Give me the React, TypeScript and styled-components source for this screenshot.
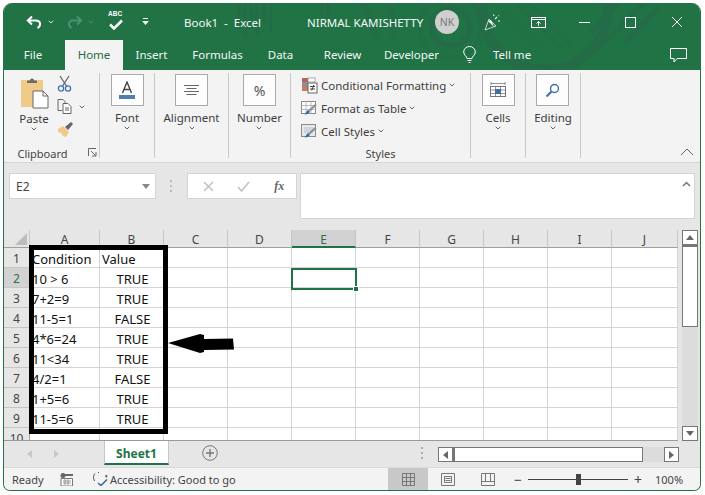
import React from "react";
import styled, { createGlobalStyle } from "styled-components";

const Global = createGlobalStyle`
  html, body { margin: 0; padding: 0; background: #fff; }
  body { font-family: "Noto Sans", "Liberation Sans", sans-serif; color: #3b3b3b; }
  * { box-sizing: border-box; }
`;

const Win = styled.div`
  margin: 3px 0 0 3px;
  width: 698px;
  height: 488px;
  border: 1px solid #217346;
  border-top: 0;
  border-radius: 9px 9px 7px 7px;
  overflow: hidden;
  display: flex;
  flex-direction: column;
  background: #e6e6e6;
`;
const Head = styled.div`
  position: relative;
  height: 67px;
  flex: none;
  background: #217346;
  color: #fff;
`;
const Decor = styled.svg`
  position: absolute;
  left: 0;
  top: 0;
`;
const TitleBar = styled.div`
  position: relative;
  display: flex;
  align-items: center;
  height: 37px;
  padding-top: 1px;
`;
const Slot = styled.div<{ $w: number; $align?: string }>`
  flex: none;
  width: ${(p) => p.$w}px;
  display: flex;
  align-items: center;
  justify-content: ${(p) => p.$align || "center"};
`;
const TitleText = styled.span<{ $w: number }>`
  flex: none;
  width: ${(p) => p.$w}px;
  font-size: 11.5px;
  white-space: pre;
  color: #f4f8f5;
`;
const Avatar = styled.div`
  width: 24px;
  height: 24px;
  border-radius: 50%;
  background: #cfcfcf;
  color: #7a7a7a;
  font-size: 10.5px;
  display: flex;
  align-items: center;
  justify-content: center;
`;
const AbcWrap = styled.div`
  position: relative;
  width: 16px;
  height: 20px;
`;
const AbcText = styled.span`
  position: absolute;
  left: 0;
  top: -2px;
  font-family: "Liberation Sans", sans-serif;
  font-size: 6.5px;
  font-weight: 700;
  color: #fff;
`;
const TabRow = styled.div`
  position: relative;
  display: flex;
  height: 30px;
`;
const Tab = styled.div<{ $w: number; $active?: boolean }>`
  flex: none;
  width: ${(p) => p.$w}px;
  display: flex;
  align-items: center;
  justify-content: center;
  font-size: 11.5px;
  white-space: nowrap;
  padding-bottom: 2px;
  color: ${(p) => (p.$active ? "#1f6c42" : "#f2f7f4")};
  background: ${(p) => (p.$active ? "#f3f3f3" : "transparent")};
`;
const Ribbon = styled.div`
  flex: none;
  height: 93px;
  display: flex;
  background: #f3f3f3;
  border-bottom: 1px solid #d6d6d6;
`;
const Group = styled.div<{ $w: number }>`
  flex: none;
  width: ${(p) => p.$w}px;
  margin: 3px 0 4px;
  border-right: 1px solid #c8c8c8;
  display: flex;
  flex-direction: column;
  position: relative;
`;
const GroupBody = styled.div`
  flex: 1;
  display: flex;
  justify-content: center;
  min-height: 0;
`;
const GroupLabel = styled.div<{ $pr?: number }>`
  height: 12px;
  line-height: 15px;
  font-size: 11px;
  text-align: center;
  color: #444;
  white-space: nowrap;
  padding-right: ${(p) => p.$pr || 0}px;
`;
const Launcher = styled.svg`
  position: absolute;
  right: 2px;
  bottom: 1px;
`;
const BigTool = styled.div`
  display: flex;
  flex-direction: column;
  align-items: center;
  font-size: 11.5px;
  color: #3d3d3d;
  white-space: nowrap;
`;
const IconBox = styled.div`
  width: 33px;
  height: 32px;
  margin-top: 1px;
  border: 1px solid #a9a9a9;
  background: #fdfdfd;
  display: flex;
  align-items: center;
  justify-content: center;
  font-size: 14px;
  color: #555;
  margin-bottom: 3px;
`;
const ToolLabel = styled.div`
  height: 17px;
  line-height: 17px;
`;
const ClipBody = styled.div`
  flex: 1;
  display: flex;
  padding-left: 13px;
`;
const PasteCol = styled.div`
  width: 34px;
  display: flex;
  flex-direction: column;
  align-items: center;
  font-size: 11.5px;
  padding-top: 4px;
`;
const PasteLabel = styled.div`
  height: 16px;
  line-height: 16px;
  margin-top: 2px;
`;
const SmallCol = styled.div`
  margin-left: 6px;
  display: flex;
  flex-direction: column;
  gap: 7px;
  padding-top: 2px;
`;
const SmallRow = styled.div`
  display: flex;
  align-items: center;
  gap: 6px;
`;
const StyleList = styled.div`
  flex: 1;
  display: flex;
  flex-direction: column;
  padding: 2px 0 0 10px;
  gap: 3px;
`;
const StyleRow = styled.div`
  height: 20px;
  display: flex;
  align-items: center;
  gap: 3px;
  font-size: 11.5px;
  color: #3d3d3d;
  white-space: nowrap;
`;
const Collapse = styled.div`
  flex: 1;
  display: flex;
  align-items: flex-end;
  justify-content: flex-end;
  padding: 0 6px 6px 0;
`;
const FormulaArea = styled.div`
  flex: none;
  height: 67px;
  padding: 10px 5px 0 5px;
  display: flex;
  align-items: flex-start;
`;
const NameBox = styled.div`
  width: 147px;
  height: 26px;
  background: #fff;
  border: 1px solid #d4d4d4;
  display: flex;
  align-items: center;
  justify-content: space-between;
  padding: 0 5px 0 6px;
  font-size: 12px;
  color: #444;
`;
const Grip = styled.div`
  width: 31px;
  height: 26px;
  display: flex;
  align-items: center;
  justify-content: center;
`;
const FxBox = styled.div`
  width: 110px;
  height: 26px;
  background: #fff;
  border: 1px solid #d4d4d4;
  display: flex;
  align-items: center;
  justify-content: space-around;
  padding: 0 0 0 3px;
  color: #bdbdbd;
`;
const FxLabel = styled.span`
  font-family: "Liberation Serif", serif;
  font-style: italic;
  font-size: 12px;
  font-weight: 700;
  color: #666;
`;
const FormulaInput = styled.div`
  margin-left: 3px;
  width: 395px;
  height: 46px;
  background: #fff;
  border: 1px solid #d4d4d4;
  display: flex;
  justify-content: flex-end;
  padding: 7px 3px 0 0;
`;
const SheetWrap = styled.div`
  flex: none;
  height: 211px;
  display: flex;
  background: #e6e6e6;
`;
const SheetMain = styled.div`
  position: relative;
  width: 674px;
  flex: none;
  overflow: hidden;
  border-bottom: 1px solid #9a9a9a;
`;
const Cells = styled.div`
  display: grid;
  grid-template-columns: 26px 70px 64px repeat(7, 64px) 66px;
  grid-template-rows: 18px repeat(9, 20px) 13px;
`;
const ColHead = styled.div<{ $on?: boolean }>`
  position: relative;
  font-size: 12px;
  text-align: center;
  line-height: 19px;
  color: ${(p) => (p.$on ? "#2e6e4b" : "#444")};
  background: ${(p) => (p.$on ? "#d2d2d2" : "#e6e6e6")};
  border-right: 1px solid #c6c6c6;
  border-bottom: ${(p) => (p.$on ? "2px solid #217346" : "1px solid #9e9e9e")};
  overflow: hidden;
`;
const Corner = styled.div`
  background: #e6e6e6;
  border-right: 1px solid #c6c6c6;
  border-bottom: 1px solid #9e9e9e;
  display: flex;
  align-items: flex-end;
  justify-content: flex-end;
  padding: 0 2px 2px 0;
`;
const RowHead = styled.div<{ $on?: boolean }>`
  background: ${(p) => (p.$on ? "#d2d2d2" : "#e6e6e6")};
  border-right: 1px solid #9e9e9e;
  border-bottom: 1px solid #c6c6c6;
  font-size: 12px;
  line-height: 22px;
  text-align: center;
  color: ${(p) => (p.$on ? "#2e6e4b" : "#444")};
  overflow: hidden;
`;
const Cell = styled.div<{ $center?: boolean }>`
  background: #fff;
  border-right: 1px solid #d4d4d4;
  border-bottom: 1px solid #d4d4d4;
  font-size: 13px;
  line-height: 22px;
  color: #111;
  padding-left: 2px;
  white-space: nowrap;
  text-align: ${(p) => (p.$center ? "center" : "left")};
  overflow: visible;
`;
const Selection = styled.div`
  position: absolute;
  left: 287px;
  top: 38px;
  width: 66px;
  height: 22px;
  border: 2px solid #217346;
`;
const Handle = styled.div`
  position: absolute;
  right: -4px;
  bottom: -4px;
  width: 6px;
  height: 6px;
  background: #217346;
  border: 1px solid #fff;
`;
const BlackBox = styled.div`
  position: absolute;
  left: 25px;
  top: 15px;
  width: 139px;
  height: 189px;
  border: 5px solid #000;
`;
const Arrow = styled.svg`
  position: absolute;
  left: 163px;
  top: 102px;
`;
const VBar = styled.div`
  flex: none;
  margin-left: 4px;
  width: 16px;
  display: flex;
  flex-direction: column;
  background: #dcdcdc;
`;
const SBtn = styled.div<{ $h?: number; $w?: number }>`
  flex: none;
  width: ${(p) => p.$w || 16}px;
  height: ${(p) => p.$h || 15}px;
  border: 1px solid #777;
  background: #fff;
  display: flex;
  align-items: center;
  justify-content: center;
`;
const VThumb = styled.div`
  flex: none;
  height: 82px;
  background: #fff;
  border: 1px solid #777;
  border-top-width: 2px;
`;
const VTrack = styled.div`
  flex: 1;
`;
const TabStrip = styled.div`
  flex: none;
  height: 27px;
  display: flex;
  background: #e6e6e6;
  border-bottom: 1px solid #dadada;
`;
const SheetNav = styled.div`
  flex: none;
  width: 100px;
  display: flex;
  align-items: center;
  justify-content: center;
  gap: 22px;
  padding: 0 22px 0 0;
`;
const SheetTab = styled.div`
  flex: none;
  width: 65px;
  height: 24px;
  background: #fff;
  border-bottom: 2px solid #217346;
  border-left: 1px solid #c6c6c6;
  border-right: 1px solid #c6c6c6;
  color: #217346;
  font-size: 12px;
  font-weight: 700;
  text-align: center;
  line-height: 26px;
`;
const AddSheet = styled.div`
  flex: none;
  margin-left: 33px;
  width: 16px;
  height: 24px;
  display: flex;
  align-items: center;
  justify-content: center;
`;
const Dots = styled.div`
  flex: none;
  margin-left: 196px;
  width: 16px;
  height: 24px;
  display: flex;
  align-items: center;
  justify-content: center;
`;
const HBar = styled.div`
  flex: none;
  margin: 6px 0 0 8px;
  width: 241px;
  height: 15px;
  display: flex;
  background: #dcdcdc;
`;
const HThumb = styled.div`
  flex: none;
  width: 190px;
  background: #fff;
  border: 1px solid #777;
  border-left-width: 2px;
`;
const Status = styled.div`
  flex: 1;
  display: flex;
  align-items: center;
  background: #f3f3f3;
  font-size: 11px;
  color: #444;
  white-space: nowrap;
`;
const ViewBtn = styled.div<{ $on?: boolean }>`
  flex: none;
  width: 40px;
  height: 100%;
  display: flex;
  align-items: center;
  justify-content: center;
  background: ${(p) => (p.$on ? "#c8c8c8" : "transparent")};
`;
const Zoom = styled.div`
  flex: none;
  position: relative;
  width: 100px;
  height: 1px;
  background: #444;
  margin: 0 4px;
`;
const ZoomKnob = styled.div`
  position: absolute;
  left: 48px;
  top: -5px;
  width: 5px;
  height: 11px;
  background: #444;
`;
const ZoomSign = styled.span`
  flex: none;
  width: 12px;
  text-align: center;
  font-size: 14px;
  color: #444;
`;

const Chev = ({ c = "#666", s = 6 }: { c?: string; s?: number }) => (
  <svg width={s} height={s - 2} viewBox="0 0 6 4" fill="none">
    <path d="M.7.7 3 3 5.300.7" stroke={c} strokeWidth="1" />
  </svg>
);

const Undo = ({ c, flip }: { c: string; flip?: boolean }) => (
  <svg width="16" height="14" viewBox="0 0 16 14" fill="none" stroke={c} strokeWidth="2" style={flip ? { transform: "scaleX(-1)" } : undefined}>
    <path d="M6 1.500 1.800 5.500 6 9.500M2 5.500h7.500c3 0 4.600 1.600 4.600 3.600 0 1.500-.8 3-2.600 3.900" />
  </svg>
);

const rowsData: [string, string][] = [
  ["Condition", "Value"],
  ["10 > 6", "TRUE"],
  ["7+2=9", "TRUE"],
  ["11-5=1", "FALSE"],
  ["4*6=24", "TRUE"],
  ["11<34", "TRUE"],
  ["4/2=1", "FALSE"],
  ["1+5=6", "TRUE"],
  ["11-5=6", "TRUE"],
  ["", ""],
];
const cols = ["A", "B", "C", "D", "E", "F", "G", "H", "I", "J"];

const StyleIcon = ({ kind }: { kind: number }) => (
  <svg width="17" height="17" viewBox="0 0 17 17" fill="none">
    {kind === 0 ? (
      <>
        <rect x="1" y="1" width="6" height="4" fill="#b4664f" />
        <rect x="7" y="1" width="7" height="4" fill="#fff" stroke="#8a8a8a" strokeWidth=".7" />
        <rect x="1" y="5" width="6" height="4" fill="#8c8c9a" />
        <rect x="1" y="9" width="6" height="5" fill="#c97a5f" />
        <rect x="7" y="6" width="9" height="10" fill="#fff" stroke="#666" />
        <path d="M9 9.500h5M9 12h5M12.800 8 10.600 13.500" stroke="#333" strokeWidth=".9" />
      </>
    ) : (
      <>
        <rect x=".5" y="1.500" width="14" height="12" fill={kind === 1 ? "#fff" : "#e8e8e8"} stroke="#8a8a8a" />
        {kind === 1 ? (
          <path d="M5 1.500v12M10 1.500v12M.5 5.500h14M.5 9.500h14" stroke="#a9a9a9" strokeWidth=".8" />
        ) : (
          <rect x="3" y="4" width="9" height="6" fill="#cfd5db" />
        )}
        <path d="M15.500 5.500 9 11.500 7.500 10l6.500-6z" fill="#8f8f8f" />
        <path d="M8.800 11.500 7 10c-1.500.6-1.200 2.200-3.500 4.500 2.600 0 5-.8 5.300-3z" fill="#2f6fa8" />
      </>
    )}
  </svg>
);

export default function App() {
  return (
    <>
      <Global />
      <Win>
        <Head>
          <Decor width="696" height="67" viewBox="0 0 696 67" fill="none">
            <g stroke="#26694a" opacity=".75">
              <path d="M235 0v26M241 0v34M247 0v26M253 0v33M260 0v20M267 0v30" strokeWidth="3" />
              <path d="M318 0v12M324 0v22" strokeWidth="3" />
              <path d="M360 0l12 34M385 0l6 36" strokeWidth="7" opacity=".6" />
              <circle cx="447" cy="24" r="19" strokeWidth="6" />
              <circle cx="447" cy="24" r="31" strokeWidth="4" opacity=".5" />
              <circle cx="541" cy="4" r="63" strokeWidth="10" />
              <path d="M512 0l44 44M525 0l42 42M497 8l38 38" strokeWidth="3" opacity=".8" />
              <path d="M615 0l-28 30M640 0l-46 46M655 4l-34 36" strokeWidth="5" />
            </g>
          </Decor>
          <TitleBar>
            <Slot $w={22} />
            <Slot $w={16}><Undo c="#fff" /></Slot>
            <Slot $w={18}><Chev c="#d8e6de" /></Slot>
            <Slot $w={7} />
            <Slot $w={16}><Undo c="#4d9070" flip /></Slot>
            <Slot $w={16}><Chev c="#4d9070" /></Slot>
            <Slot $w={9} />
            <Slot $w={16}>
              <AbcWrap>
                <AbcText>ABC</AbcText>
                <svg width="16" height="20" viewBox="0 0 16 20" fill="none" style={{ position: "absolute", left: 0, top: 0 }}>
                  <path d="M2 12.500 6 16.500 14 8.500" stroke="#fff" strokeWidth="2.600" />
                </svg>
              </AbcWrap>
            </Slot>
            <Slot $w={9} />
            <Slot $w={24}>
              <svg width="7" height="8" viewBox="0 0 7 8" fill="#eef5f0">
                <rect x="1" y="0" width="5" height="1" />
                <path d="M0 3h7L3.500 7z" />
              </svg>
            </Slot>
            <Slot $w={27} />
            <TitleText $w={123}>Book1  -  Excel</TitleText>
            <TitleText $w={128}>NIRMAL KAMISHETTY</TitleText>
            <Slot $w={24}><Avatar>NK</Avatar></Slot>
            <Slot $w={24} />
            <Slot $w={18}>
              <svg width="17" height="17" viewBox="0 0 17 17" fill="none" stroke="#eef5f0">
                <path d="M1 16 5 5l7 7z" strokeWidth=".8" />
                <path d="M4 7l6 6-3-7z" fill="#fff" stroke="none" />
                <path d="M11 5l2-2M14 7h2M10 2 9.500.5M15 1.500l-.5.5" strokeWidth="1.100" />
              </svg>
            </Slot>
            <Slot $w={29} />
            <Slot $w={16}>
              <svg width="15" height="11" viewBox="0 0 15 11" fill="none" stroke="#fff">
                <rect x=".5" y=".5" width="14" height="10" />
                <path d="M.5 2.500h14M7.500 9V4.500M5.500 6.500l2-2 2 2" />
              </svg>
            </Slot>
            <Slot $w={31} />
            <Slot $w={14}>
              <svg width="11" height="1" viewBox="0 0 11 1"><rect width="11" height="1" fill="#fff" /></svg>
            </Slot>
            <Slot $w={31} />
            <Slot $w={16}>
              <svg width="11" height="11" viewBox="0 0 11 11" fill="none" stroke="#fff"><rect x=".5" y=".5" width="10" height="10" /></svg>
            </Slot>
            <Slot $w={31} />
            <Slot $w={16}>
              <svg width="12" height="12" viewBox="0 0 12 12" stroke="#fff" strokeWidth="1"><path d="M1 1l10 10M11 1 1 11" /></svg>
            </Slot>
          </TitleBar>
          <TabRow>
            <Tab $w={58}>File</Tab>
            <Tab $w={3} />
            <Tab $w={58} $active>Home</Tab>
            <Tab $w={57}>Insert</Tab>
            <Tab $w={75}>Formulas</Tab>
            <Tab $w={51}>Data</Tab>
            <Tab $w={73}>Review</Tab>
            <Tab $w={65}>Developer</Tab>
            <Slot $w={18} />
            <Slot $w={15}>
              <svg width="13" height="18" viewBox="0 0 13 18" fill="none" stroke="#fff">
                <path d="M4 12.500c0-2-3.300-3.400-3.300-6.500a5.800 5.500 0 0 1 11.600 0c0 3.100-3.300 4.500-3.300 6.500zM4.500 14.500h4M5.500 16.500h2" />
              </svg>
            </Slot>
            <Slot $w={15} />
            <Tab $w={40}>Tell me</Tab>
            <Slot $w={137} />
            <Slot $w={18}>
              <svg width="17" height="15" viewBox="0 0 17 15" fill="none" stroke="#fff">
                <path d="M.5.500h16v10H7l-3 3.500v-3.500H.5z" />
              </svg>
            </Slot>
          </TabRow>
        </Head>
        <Ribbon>
          <Group $w={96}>
            <ClipBody>
              <PasteCol>
                <svg width="29" height="32" viewBox="0 0 29 32" fill="none">
                  <rect x="1" y="3" width="22" height="27" rx="1" fill="#efcb8a" />
                  <path d="M7 6V3.500h3a2 2 0 0 1 4 0h3V6z" fill="#6b6b6b" />
                  <path d="M13 14h10l5 5v12H13z" fill="#fff" stroke="#666" />
                  <path d="M23 14v5h5" stroke="#666" />
                </svg>
                <PasteLabel>Paste</PasteLabel>
                <Chev />
              </PasteCol>
              <SmallCol>
                <svg width="15" height="17" viewBox="0 0 15 17" fill="none">
                  <path d="M3 1l6.500 10M12 1 5.500 11" stroke="#666" strokeWidth="1.300" />
                  <circle cx="4" cy="13.500" r="2.600" stroke="#3e75ae" strokeWidth="1.300" />
                  <circle cx="11" cy="13.500" r="2.600" stroke="#3e75ae" strokeWidth="1.300" />
                </svg>
                <SmallRow>
                  <svg width="16" height="15" viewBox="0 0 16 15" fill="none" stroke="#666">
                    <path d="M5 11.500H1V.5h5l2 2v2" />
                    <path d="M6 4.500h5l3 3v7H6zM8 9h4M8 11h4" fill="#fbfbfb" />
                  </svg>
                  <Chev />
                </SmallRow>
                <svg width="17" height="17" viewBox="0 0 17 17" style={{ marginTop: 0 }}>
                  <path d="M1 8l5-3 6 6-3 5-3-1-2-3-3-1z" fill="#efcb8a" />
                  <path d="M8 6 14 1l2 2-5 6z" fill="#666" />
                </svg>
              </SmallCol>
            </ClipBody>
            <GroupLabel $pr={18}>Clipboard</GroupLabel>
            <Launcher width="9" height="9" viewBox="0 0 9 9" fill="none" stroke="#666">
              <path d="M.5 8V.5H8M3 3l4.500 4.500M4 8h4V4" />
            </Launcher>
          </Group>
          <Group $w={55}>
            <GroupBody>
              <BigTool>
                <IconBox>
                  <svg width="18" height="19" viewBox="0 0 18 19" fill="none">
                    <path d="M4.500 12 9 1l4.500 11M6 8.500h6" stroke="#444" strokeWidth="1.400" />
                    <rect x="1" y="14" width="16" height="4" fill="#4f7fae" />
                  </svg>
                </IconBox>
                <ToolLabel>Font</ToolLabel>
                <Chev />
              </BigTool>
            </GroupBody>
          </Group>
          <Group $w={74}>
            <GroupBody>
              <BigTool>
                <IconBox>
                  <svg width="15" height="12" viewBox="0 0 15 12" stroke="#666"><path d="M0 1.500h15M2.500 4.500h10M0 7.500h15M2.500 10.500h10" /></svg>
                </IconBox>
                <ToolLabel>Alignment</ToolLabel>
                <Chev />
              </BigTool>
            </GroupBody>
          </Group>
          <Group $w={62}>
            <GroupBody>
              <BigTool>
                <IconBox>%</IconBox>
                <ToolLabel>Number</ToolLabel>
                <Chev />
              </BigTool>
            </GroupBody>
          </Group>
          <Group $w={180}>
            <StyleList>
              <StyleRow><StyleIcon kind={0} />Conditional Formatting <Chev /></StyleRow>
              <StyleRow><StyleIcon kind={1} />Format as Table <Chev /></StyleRow>
              <StyleRow><StyleIcon kind={2} />Cell Styles <Chev /></StyleRow>
            </StyleList>
            <GroupLabel>Styles</GroupLabel>
          </Group>
          <Group $w={55}>
            <GroupBody>
              <BigTool>
                <IconBox>
                  <svg width="16" height="18" viewBox="0 0 16 18" fill="none" stroke="#777">
                    <path d="M1 1v3M15 1v3M1 2.500h14" strokeWidth=".8" />
                    <rect x=".5" y="5.500" width="15" height="10" fill="#fff" />
                    <path d="M.5 9h15M.5 12.500h15M5.500 5.500v10M10.500 5.500v10" strokeWidth=".8" />
                    <rect x="5" y="8" width="6" height="5" fill="#3f6fa5" stroke="none" />
                  </svg>
                </IconBox>
                <ToolLabel>Cells</ToolLabel>
                <Chev />
              </BigTool>
            </GroupBody>
          </Group>
          <Group $w={55}>
            <GroupBody>
              <BigTool>
                <IconBox>
                  <svg width="15" height="15" viewBox="0 0 15 15" fill="none" stroke="#3f73aa">
                    <circle cx="9.500" cy="5.500" r="4" strokeWidth="1.400" />
                    <path d="M6.500 8.500 1.500 13.500" strokeWidth="2.200" />
                  </svg>
                </IconBox>
                <ToolLabel>Editing</ToolLabel>
                <Chev />
              </BigTool>
            </GroupBody>
          </Group>
          <Collapse>
            <svg width="14" height="8" viewBox="0 0 14 8" fill="none" stroke="#666"><path d="M1 7l6-6 6 6" /></svg>
          </Collapse>
        </Ribbon>
        <FormulaArea>
          <NameBox>
            E2
            <svg width="8" height="5" viewBox="0 0 8 5" fill="#888"><path d="M0 0h8L4 5z" /></svg>
          </NameBox>
          <Grip>
            <svg width="3" height="13" viewBox="0 0 3 13" fill="#bbb">
              <rect y="0" width="2" height="2" /><rect y="5" width="2" height="2" /><rect y="10" width="2" height="2" />
            </svg>
          </Grip>
          <FxBox>
            <svg width="11" height="11" viewBox="0 0 11 11" stroke="#c0c0c0" strokeWidth="1.500"><path d="M1 1l9 9M10 1 1 10" /></svg>
            <svg width="13" height="11" viewBox="0 0 13 11" fill="none" stroke="#c0c0c0" strokeWidth="1.500"><path d="M1 6l3.500 4L12 1" /></svg>
            <FxLabel>fx</FxLabel>
          </FxBox>
          <FormulaInput>
            <svg width="9" height="6" viewBox="0 0 9 6" fill="none" stroke="#777" strokeWidth="1.500"><path d="M1 5l3.500-3.500L8 5" /></svg>
          </FormulaInput>
        </FormulaArea>
        <SheetWrap>
          <SheetMain>
            <Cells>
              <Corner>
                <svg width="12" height="12" viewBox="0 0 12 12"><path d="M12 0v12H0z" fill="#bdbdbd" /></svg>
              </Corner>
              {cols.map((c) => (
                <ColHead key={c} $on={c === "E"}>{c}</ColHead>
              ))}
              {rowsData.map((r, i) => (
                <React.Fragment key={i}>
                  <RowHead $on={i === 1}>{i + 1}</RowHead>
                  <Cell>{r[0]}</Cell>
                  <Cell $center={i > 0}>{r[1]}</Cell>
                  {cols.slice(2).map((c) => (
                    <Cell key={c} />
                  ))}
                </React.Fragment>
              ))}
            </Cells>
            <Selection><Handle /></Selection>
            <BlackBox />
            <Arrow width="68" height="22" viewBox="0 0 68 22">
              <path d="M1 11 33 2l4 1v4l29-.5 1 11-30 .500v2l-4 1z" fill="#000" />
            </Arrow>
          </SheetMain>
          <VBar>
            <SBtn>
              <svg width="8" height="5" viewBox="0 0 8 5" fill="#666"><path d="M0 5h8L4 0z" /></svg>
            </SBtn>
            <VThumb />
            <VTrack />
            <SBtn>
              <svg width="8" height="5" viewBox="0 0 8 5" fill="#666"><path d="M0 0h8L4 5z" /></svg>
            </SBtn>
          </VBar>
        </SheetWrap>
        <TabStrip>
          <SheetNav>
            <svg width="5" height="8" viewBox="0 0 5 8" fill="#c8c8c8"><path d="M5 0v8L0 4z" /></svg>
            <svg width="5" height="8" viewBox="0 0 5 8" fill="#c8c8c8"><path d="M0 0v8l5-4z" /></svg>
          </SheetNav>
          <SheetTab>Sheet1</SheetTab>
          <AddSheet>
            <svg width="16" height="16" viewBox="0 0 16 16" fill="none" stroke="#777">
              <circle cx="8" cy="8" r="7.300" />
              <path d="M8 4v8M4 8h8" strokeWidth="1.400" />
            </svg>
          </AddSheet>
          <Dots>
            <svg width="3" height="13" viewBox="0 0 3 13" fill="#aaa">
              <rect width="2" height="2" /><rect y="5" width="2" height="2" /><rect y="10" width="2" height="2" />
            </svg>
          </Dots>
          <HBar>
            <SBtn $w={15}>
              <svg width="5" height="8" viewBox="0 0 5 8" fill="#666"><path d="M5 0v8L0 4z" /></svg>
            </SBtn>
            <HThumb />
            <VTrack />
            <SBtn $w={15}>
              <svg width="5" height="8" viewBox="0 0 5 8" fill="#666"><path d="M0 0v8l5-4z" /></svg>
            </SBtn>
          </HBar>
        </TabStrip>
        <Status>
          <Slot $w={8} />
          <Slot $w={47} $align="flex-start">Ready</Slot>
          <Slot $w={15}>
            <svg width="13" height="13" viewBox="0 0 13 13" fill="#666">
              <circle cx="3" cy="2.500" r="2.500" />
              <rect x="5" y="1" width="8" height="2" />
              <path d="M1 5.500h11.500V13H1z" fill="#fff" stroke="#777" />
              <path d="M3 8h8M3 10h8M5 6v6M8 6v6" stroke="#777" strokeWidth=".7" />
            </svg>
          </Slot>
          <Slot $w={17} />
          <Slot $w={17}>
            <svg width="16" height="14" viewBox="0 0 16 14" fill="none" stroke="#555">
              <path d="M3 1.500C1.500 3 .8 6 2.500 9M7 .5h-1M13 4h2.500M14.300 3v2.500" />
              <path d="M6 11l3 2.500L15 7.500" stroke="#2a6a98" strokeWidth="1.500" />
            </svg>
          </Slot>
          <Slot $w={2} />
          <Slot $w={278} $align="flex-start">Accessibility: Good to go</Slot>
          <ViewBtn $on>
            <svg width="13" height="13" viewBox="0 0 13 13" fill="none" stroke="#777"><path d="M.5.500h12v12H.5zM4.500.500v12M8.500.500v12M.5 4.500h12M.5 8.500h12" /></svg>
          </ViewBtn>
          <ViewBtn>
            <svg width="14" height="13" viewBox="0 0 14 13" fill="none" stroke="#777"><path d="M.5.500h13v12H.5zM3.500 3.500h7v6h-7zM4.500 5.500h5M4.500 7.500h5" /></svg>
          </ViewBtn>
          <ViewBtn>
            <svg width="14" height="13" viewBox="0 0 14 13" fill="none" stroke="#777"><path d="M.5.500h13v12H.5zM.5 8.500h13M4.500.500v8M9.500.500v8" /></svg>
          </ViewBtn>
          <Slot $w={4} />
          <ZoomSign>−</ZoomSign>
          <Zoom><ZoomKnob /></Zoom>
          <ZoomSign>+</ZoomSign>
          <Slot $w={11} />
          <span>100%</span>
        </Status>
      </Win>
    </>
  );
}
